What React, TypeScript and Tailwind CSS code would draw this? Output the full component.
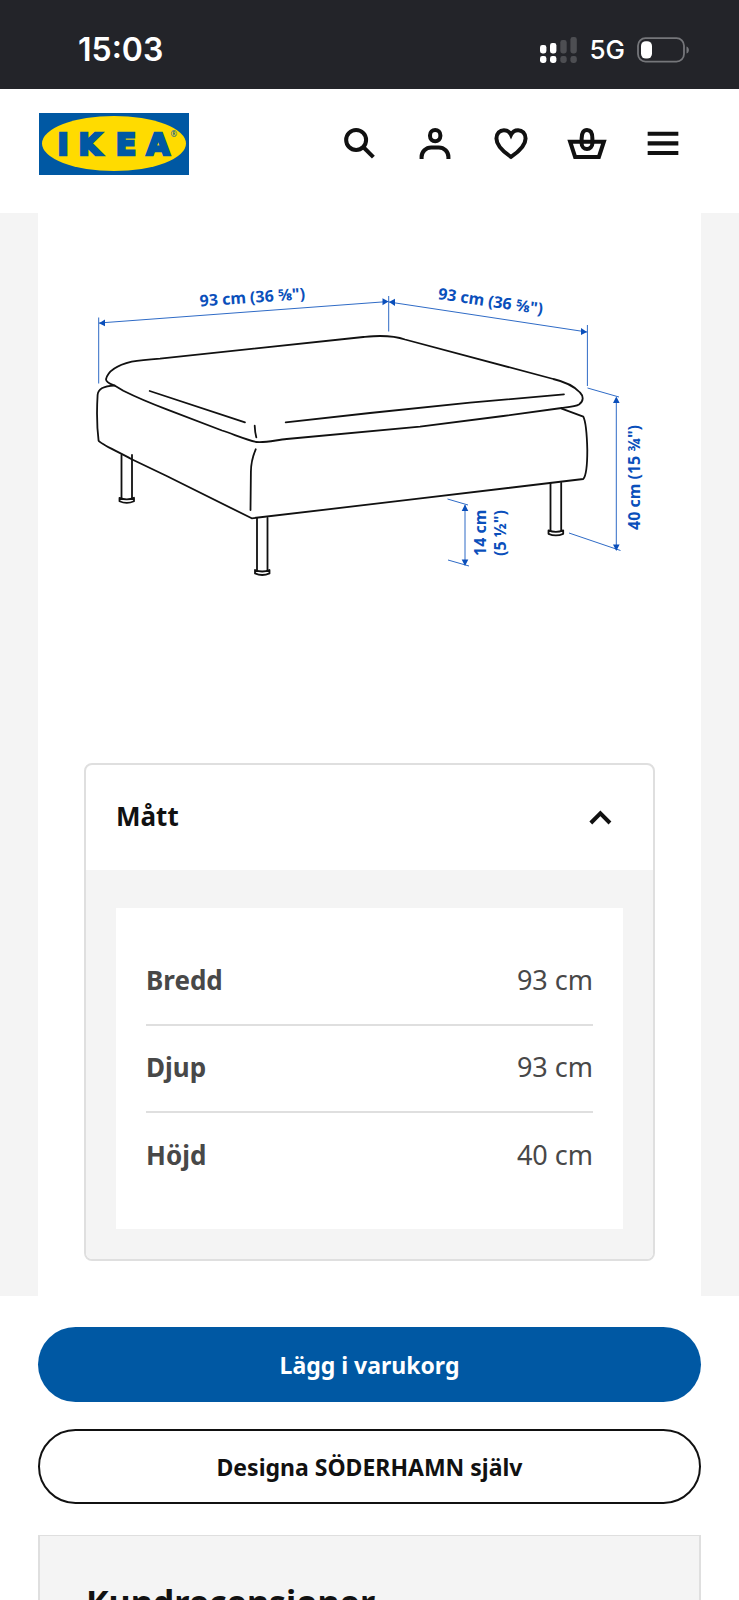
import { useState } from 'react';
import type { ReactNode } from 'react';

const measurements = [
  { label: 'Bredd', value: '93 cm' },
  { label: 'Djup', value: '93 cm' },
  { label: 'Höjd', value: '40 cm' },
];

function StatusBar() {
  return (
    <div className="flex h-[89px] shrink-0 items-center justify-between bg-[#232429] pt-2.5 pr-[50px] pl-[78px] text-white">
      <span className="font-[Inter,sans-serif] text-[32px] leading-10 font-semibold">15:03</span>
      <div className="flex items-center gap-3">
        <svg width="38" height="28" viewBox="0 0 38 28" fill="#fff" aria-hidden="true">
          <rect x="1" y="9" width="6.4" height="8.4" rx="2.4" />
          <rect x="1" y="20" width="6.4" height="7" rx="2.4" />
          <rect x="11" y="7" width="6.4" height="10.4" rx="2.4" />
          <rect x="11" y="20" width="6.4" height="7" rx="2.4" />
          <g fill="#4d4e52">
            <rect x="21.3" y="4" width="6.4" height="13.4" rx="2.4" />
            <rect x="21.3" y="20" width="6.4" height="7" rx="2.4" />
            <rect x="31.4" y="1" width="6.4" height="16.4" rx="2.4" />
            <rect x="31.4" y="20" width="6.4" height="7" rx="2.4" />
          </g>
        </svg>
        <span className="font-[Inter,sans-serif] text-[26px] leading-8 font-medium">5G</span>
        <svg width="52" height="26" viewBox="0 0 52 26" aria-hidden="true">
          <rect x="1" y="1.2" width="46" height="23.4" rx="7.5" fill="none" stroke="#75767a" strokeWidth="1.8" />
          <rect x="4" y="4.2" width="11" height="17.4" rx="4.8" fill="#fff" />
          <path d="M49.5 9.5c3.2 1 3.2 6 0 7z" fill="#75767a" />
        </svg>
      </div>
    </div>
  );
}

function Logo() {
  return (
    <svg width="150" height="62" viewBox="0 0 150 62" role="img" aria-label="IKEA">
      <rect width="150" height="62" fill="#0058a3" />
      <ellipse cx="75" cy="30.5" rx="72" ry="27.5" fill="#ffdb00" />
      <g
        fill="#0058a3"
        stroke="#0058a3"
        strokeWidth="2.6"
        textAnchor="middle"
        fontFamily="DejaVu Sans, sans-serif"
        fontWeight="700"
        fontSize="30"
      >
        <text x="24" y="41.5">I</text>
        <text x="51" y="41.5">K</text>
        <text x="87" y="41.5">E</text>
        <text x="119" y="41.5">A</text>
      </g>
      <text x="131.5" y="24" fill="#0058a3" fontFamily="Noto Sans, sans-serif" fontSize="8">®</text>
    </svg>
  );
}

function IconButton({ label, children }: { label: string; children: ReactNode }) {
  return (
    <button type="button" aria-label={label} className="flex h-[76px] w-[76px] items-center justify-center">
      <svg width="46" height="46" viewBox="0 0 24 24" fill="none" stroke="#111" strokeWidth="2.1">
        {children}
      </svg>
    </button>
  );
}

function Header() {
  return (
    <header className="flex h-[124px] shrink-0 items-start justify-between bg-white px-[38px] pt-4">
      <a href="#" className="mt-2 ml-px">
        <Logo />
      </a>
      <nav className="flex">
        <IconButton label="Sök">
          <circle cx="10.5" cy="10.4" r="5.2" />
          <path d="M14.2 14.1l5.3 5.3" />
        </IconButton>
        <IconButton label="Logga in">
          <rect x="9.4" y="5.2" width="5.4" height="5.9" rx="2.7" />
          <path d="M5 20.3v-1a5 5 0 0 1 5-5h4a5 5 0 0 1 5 5v1" />
        </IconButton>
        <IconButton label="Favoriter">
          <path d="M12 19.2C9 17.2 4.4 13.8 4.4 9.6c0-2.6 1.8-4.3 3.9-4.3 1.6 0 3 .9 3.7 2.4.7-1.5 2.1-2.4 3.7-2.4 2.1 0 3.9 1.7 3.9 4.3C19.6 13.8 15 17.2 12 19.2z" />
        </IconButton>
        <IconButton label="Varukorg">
          <path d="M3.2 11.3h17.6l-2.6 8H5.8z" />
          <path d="M9.2 12.2V9.6c0-2.8 1-4.4 2.8-4.4s2.8 1.6 2.8 4.4v2.6a2.8 2.9 0 0 1-5.6 0z" />
        </IconButton>
        <IconButton label="Meny">
          <path d="M4 7.2h16M4 12.2h16M4 17.2h16" />
        </IconButton>
      </nav>
    </header>
  );
}

function Leg({ left, right, top, bottom }: { left: number; right: number; top: number; bottom: number }) {
  const half = (right - left) / 2 + 2;
  return (
    <g>
      <path d={`M${left} ${top}V${bottom}M${right} ${top}V${bottom}`} />
      <path d={`M${left - 2} ${bottom}q${half} 3 ${half * 2} 0v3.4q-${half} 3.2 -${half * 2} 0z`} />
    </g>
  );
}

function ProductDrawing() {
  return (
    <svg viewBox="84 270 571 310" className="w-full" role="img" aria-label="Måttskiss">
      <g fill="none" stroke="#111" strokeWidth="1.8" strokeLinecap="round" strokeLinejoin="round">
        <path d="M131.7 361.7C118 365 108 371 106 379.3C106 383 112 384.5 115 385.7L123.3 390.7C138 398 150 403 166.7 409.3L222 430.5C234 434.5 246 439.5 256 442C266 443 276 440 286.7 439L420 426.7L503.3 416L561.7 408C570 407 576 406.5 579 404.5C584 401 583.5 396 580 392.5C574 386 564 381.5 553.3 379L405 339.5C398 337 388 336 380 336C374 336 369 336.5 363.3 337L160 358.7Q141 360 131.7 361.7Z" />
        <path d="M149.7 391L245 422.3" />
        <path d="M285.7 422.3L370 413L470 402.7L564 394.3" />
        <path d="M254.7 425.7Q255 433 256.3 437.3" />
        <path d="M114.3 385.7C105 386 98 389 97.6 395C96.7 410 97 428 98.6 440.7C100 444 118 451.5 131.7 459.3L166.7 476L251.7 518.3L410 499.7L583.3 479C586 476 587.3 462 587.3 450C587 438 586 422 583.3 416.7L561.7 408.7" />
        <path d="M255.7 449.3C252 458 250.9 463 250.9 472L250.5 510" />
        <Leg left={121.5} right={132} top={455} bottom={497.8} />
        <Leg left={257} right={267.5} top={518} bottom={570} />
        <Leg left={550.5} right={561.2} top={483} bottom={530.4} />
      </g>
      <g fill="none" stroke="#2f6bc6">
        <path d="M98.7 317.5V383.5M99 323L388.5 301.5M388.7 296V331.5M389 302L587 332M587.4 325V386" />
        <path d="M587.5 388L619 397M616.3 398V549.5M569 533L620.5 550.5" />
        <path d="M447.5 499L468 505M465 505V565M448 560L469 566" />
      </g>
      <g fill="#0a4fbb">
        <path d="M99 323.2L105 319.5V326.2Z" />
        <path d="M388.5 301.5L382.5 298.2V305.3Z" />
        <path d="M389 302L395 298.8V306Z" />
        <path d="M587 332L581 328V335Z" />
        <path d="M616.3 396.5L613 403H619.6ZM616.3 551L613 544.5H619.6Z" />
        <path d="M465 504.5L461.7 511H468.3ZM465 566L461.7 559.5H468.3Z" />
      </g>
      <g fill="#0a4fbb" fontFamily="Noto Sans, sans-serif" fontWeight="700" fontSize="16">
        <text transform="translate(200 306.5) rotate(-4)">93 cm (36 ⅝")</text>
        <text transform="translate(437.5 299) rotate(8.5)">93 cm (36 ⅝")</text>
        <text transform="translate(640 530) rotate(-90)">40 cm (15 ¾")</text>
        <text transform="translate(486 556) rotate(-90)">14 cm</text>
        <text transform="translate(505.5 556) rotate(-90)">(5 ½")</text>
      </g>
    </svg>
  );
}

function Measurements() {
  const [open, setOpen] = useState(true);

  return (
    <section className="overflow-hidden rounded-lg border-2 border-[#dfdfdf] bg-white">
      <h2>
        <button
          type="button"
          aria-expanded={open}
          onClick={() => setOpen(!open)}
          className="flex h-[105px] w-full items-center justify-between px-[30px] text-[26px] font-bold text-[#111]"
        >
          <span className="pb-0.5">Mått</span>
          <svg width="46" height="46" viewBox="0 0 24 24" fill="none" stroke="#111" strokeWidth="2.1">
            <path d="M7.2 14.6l5-5 5 5" className={open ? '' : 'origin-center rotate-180'} />
          </svg>
        </button>
      </h2>
      {open ? (
        <div className="bg-[#f4f4f4] px-[30px] pt-[38px] pb-[30px]">
          <div className="bg-white p-[30px]">
            <table className="w-full text-[#484848]">
              <tbody>
                {measurements.map((row) => (
                  <tr key={row.label} className="h-[87px] border-b-2 border-[#dfdfdf] last:border-b-0">
                    <th scope="row" className="p-0 pb-0.5 text-left text-[26px] font-bold">
                      {row.label}
                    </th>
                    <td className="p-0 pb-0.5 text-right text-[27px]">{row.value}</td>
                  </tr>
                ))}
              </tbody>
            </table>
          </div>
        </div>
      ) : null}
    </section>
  );
}

export default function App() {
  return (
    <div className="flex h-screen flex-col overflow-hidden bg-white font-['Noto_Sans',sans-serif] text-[#111]">
      <StatusBar />
      <Header />
      <main className="shrink-0">
        <div className="bg-[#f4f4f4] px-[38px]">
          <div className="bg-white px-[46px] pt-[57px] pb-[35px]">
            <div className="pb-[183px]">
              <ProductDrawing />
            </div>
            <Measurements />
          </div>
        </div>
        <div className="flex flex-col gap-[27px] px-[38px] pt-[31px] pb-[31px]">
          <button type="button" className="h-[75px] rounded-full bg-[#0058a3] pt-0.5 text-[23px] font-bold text-white">
            Lägg i varukorg
          </button>
          <button type="button" className="h-[75px] rounded-full border-2 border-[#111] pt-0.5 text-[23px] font-bold">
            Designa SÖDERHAMN själv
          </button>
        </div>
        <section className="mx-[38px] border-2 border-t border-[#dfdfdf] bg-[#f4f4f4] px-[46px] pt-[42px] pb-10">
          <h2 className="text-[34px] leading-[48px] font-bold">Kundrecensioner</h2>
        </section>
      </main>
    </div>
  );
}
